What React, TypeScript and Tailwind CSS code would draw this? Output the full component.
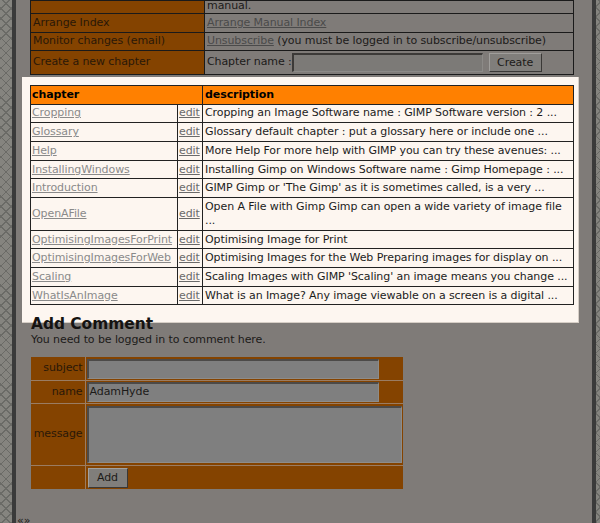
const chapters: [string, string[]][] = [
  ["Cropping", ["Cropping an Image Software name : GIMP Software version : 2 ..."]],
  ["Glossary", ["Glossary default chapter : put a glossary here or include one ..."]],
  ["Help", ["More Help For more help with GIMP you can try these avenues: ..."]],
  ["InstallingWindows", ["Installing Gimp on Windows Software name : Gimp Homepage : ..."]],
  ["Introduction", ["GIMP Gimp or 'The Gimp' as it is sometimes called, is a very ..."]],
  ["OpenAFile", ["Open A File with Gimp Gimp can open a wide variety of image file", "..."]],
  ["OptimisingImagesForPrint", ["Optimising Image for Print"]],
  ["OptimisingImagesForWeb", ["Optimising Images for the Web Preparing images for display on ..."]],
  ["Scaling", ["Scaling Images with GIMP 'Scaling' an image means you change ..."]],
  ["WhatIsAnImage", ["What is an Image? Any image viewable on a screen is a digital ..."]],
]

const hatch =
  "bg-[#85847f] bg-[repeating-linear-gradient(45deg,#6a6a66_0_1px,transparent_1px_7px),repeating-linear-gradient(-45deg,#6a6a66_0_1px,transparent_1px_7px)]"

function Stripe({ w }: { w: string }) {
  return <div className={`${w} shrink-0 ${hatch}`} />
}

export default function App() {
  return (
    <div className="flex h-[523px] w-[600px] overflow-hidden font-['DejaVu_Sans',sans-serif] text-[11px] tracking-[-0.09px] text-[#1c1a18]">
      <Stripe w="w-[12px]" />
      <div className="w-[4px] shrink-0 bg-[#3a3a3a]" />
      <main className="flex-1 bg-[#7f7b78] pl-[14px] pr-[13px]">
        {/* top options table (dimmed) */}
        <table className="w-[544px] table-fixed border-collapse border border-[#1a1a1a] leading-[13.7px]">
          <colgroup>
            <col className="w-[174px]" />
            <col />
          </colgroup>
          <tbody>
            <tr className="h-[13px]">
              <td className="border border-[#1a1a1a] bg-[#844300]" />
              <td className="border border-[#1a1a1a] px-[2px] align-bottom">
                <div className="h-[12px] overflow-hidden">
                  <div className="-mt-[2px]">manual.</div>
                </div>
              </td>
            </tr>
            <tr className="h-[18.5px]">
              <td className="border border-[#1a1a1a] bg-[#844300] px-[2px] text-[#2a1808]">Arrange Index</td>
              <td className="border border-[#1a1a1a] px-[2px]">
                <a className="text-[#4a4a4a] underline">Arrange Manual Index</a>
              </td>
            </tr>
            <tr className="h-[18.5px]">
              <td className="border border-[#1a1a1a] bg-[#844300] px-[2px] text-[#2a1808]">Monitor changes (email)</td>
              <td className="border border-[#1a1a1a] px-[2px] whitespace-nowrap">
                <a className="text-[#4a4a4a] underline">Unsubscribe</a> (you must be logged in to subscribe/unsubscribe)
              </td>
            </tr>
            <tr className="h-[23.5px]">
              <td className="border border-[#1a1a1a] bg-[#844300] px-[2px] text-[#2a1808]">Create a new chapter</td>
              <td className="border border-[#1a1a1a] px-[2px]">
                <div className="flex items-center">
                  <span>Chapter name :</span>
                  <div className="h-[19px] w-[191px] border-t-2 border-l-2 border-t-[#3c3a38] border-l-[#3c3a38] border-b border-r border-b-[#8c8a87] border-r-[#8c8a87] bg-[#7c7a77]" />
                  <button className="ml-[6px] h-[19px] w-[53px] border border-t-[#a09e9b] border-l-[#a09e9b] border-b-[#3a3836] border-r-[#3a3836] bg-[#807e7b] text-[11px] leading-none text-[#1c1a18]">
                    Create
                  </button>
                </div>
              </td>
            </tr>
          </tbody>
        </table>

        {/* highlighted chapter list */}
        <div className="-mb-[10px] -ml-[8px] mt-[2px] w-[557px] border-r border-b border-r-[#d6cec6] border-b-[#d6cec6] bg-[#fdf6f0] pb-[17px] pl-[8px] pt-[8px]">
          <table className="w-[544px] table-fixed border-collapse border border-[#222] leading-[13.7px]">
            <colgroup>
              <col className="w-[147px]" />
              <col className="w-[25px]" />
              <col />
            </colgroup>
            <thead>
              <tr className="h-[19px] bg-[#ff8000] text-left font-bold text-black">
                <th colSpan={2} className="border border-[#222] px-[1px]">chapter</th>
                <th className="border border-[#222] px-[2px]">description</th>
              </tr>
            </thead>
            <tbody>
              {chapters.map(([name, desc]) => (
                <tr key={name} className={desc.length > 1 ? "h-[32.6px]" : "h-[18.7px]"}>
                  <td className="border border-[#222] px-[1px] whitespace-nowrap">
                    <a className="text-[#8a8a8a] underline">{name}</a>
                  </td>
                  <td className="border border-[#222] px-[1px]">
                    <a className="text-[#6a6a6a] underline">edit</a>
                  </td>
                  <td className="border border-[#222] px-[2px] whitespace-nowrap text-[#1c1c1c]">
                    {desc.map((line, i) => (
                      <div key={i}>{line}</div>
                    ))}
                  </td>
                </tr>
              ))}
            </tbody>
          </table>
        </div>

        <h2 className="mt-[2px] pl-[1px] text-[15.4px] leading-[18px] font-bold tracking-normal text-[#151311]">Add Comment</h2>
        <p className="pl-[1px] leading-[13px] text-[#1c1a18]">You need to be logged in to comment here.</p>

        {/* comment form (dimmed) */}
        <table className="mt-[11px] ml-[1px] w-[372px] table-fixed border-collapse bg-[#844300] text-[#2a1808]">
          <colgroup>
            <col className="w-[54px]" />
            <col />
          </colgroup>
          <tbody>
            <tr className="h-[23px]">
              <td className="border-r border-b border-[#9a7c62] pr-[2px] text-right">subject</td>
              <td className="border-b border-[#9a7c62] pl-[1px]">
                <div className="h-[20px] w-[292px] border-t-2 border-l-2 border-[#4c4a48] border-b border-r border-b-[#8e8c89] border-r-[#8e8c89] bg-[#7f7f7f]" />
              </td>
            </tr>
            <tr className="h-[23px]">
              <td className="border-r border-b border-[#9a7c62] pr-[2px] text-right">name</td>
              <td className="border-b border-[#9a7c62] pl-[1px]">
                <div className="flex h-[20px] w-[292px] items-center border-t-2 border-l-2 border-[#4c4a48] border-b border-r border-b-[#8e8c89] border-r-[#8e8c89] bg-[#7f7f7f] pl-[1px] text-[#1c1a18]">
                  AdamHyde
                </div>
              </td>
            </tr>
            <tr className="h-[62px]">
              <td className="border-r border-b border-[#9a7c62] pr-[2px] text-right">message</td>
              <td className="border-b border-[#9a7c62] pl-[1px]">
                <div className="h-[57px] w-[315px] border-t-2 border-l-2 border-[#4c4a48] border-b border-r border-b-[#8e8c89] border-r-[#8e8c89] bg-[#7f7f7f]" />
              </td>
            </tr>
            <tr className="h-[24px]">
              <td className="border-r border-[#9a7c62]" />
              <td className="pl-[2px]">
                <button className="h-[20px] w-[40px] border border-t-[#a3a19e] border-l-[#a3a19e] border-b-[#3a3836] border-r-[#3a3836] bg-[#807e7b] text-[11px] leading-none text-[#1c1a18]">
                  Add
                </button>
              </td>
            </tr>
          </tbody>
        </table>

        <div className="mt-[25px] -ml-[13px] leading-[13px] text-[#1c1a18]">«»</div>
      </main>
      <div className="w-[4px] shrink-0 bg-[#3a3a3a]" />
      <Stripe w="w-[9px]" />
    </div>
  )
}
